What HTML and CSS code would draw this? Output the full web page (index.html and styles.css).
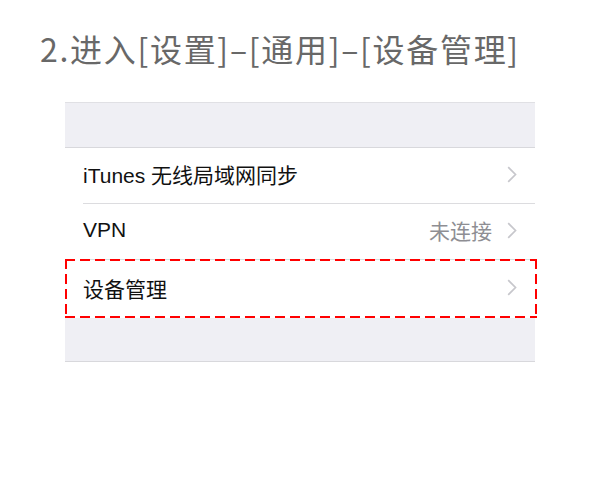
FILE: index.html
```html
<!DOCTYPE html>
<html lang="zh">
<head>
<meta charset="utf-8">
<link rel="stylesheet" href="styles.css">
</head>
<body>
<h1 class="title">2.进入[设置]–[通用]–[设备管理]</h1>
<div class="panel">
  <div class="gap top"></div>
  <div class="group">
    <div class="row">
      <span class="label">iTunes 无线局域网同步</span>
      <span class="right"><svg class="chev" width="10" height="17" viewBox="0 0 10 17"><path d="M1.2 1.2 L8.5 8.5 L1.2 15.8" fill="none" stroke="#c7c7cc" stroke-width="1.7"/></svg></span>
    </div>
    <div class="row">
      <span class="label">VPN</span>
      <span class="right"><span class="detail">未连接</span><svg class="chev" width="10" height="17" viewBox="0 0 10 17"><path d="M1.2 1.2 L8.5 8.5 L1.2 15.8" fill="none" stroke="#c7c7cc" stroke-width="1.7"/></svg></span>
    </div>
    <div class="row marked">
      <span class="label">设备管理</span>
      <span class="right"><svg class="chev" width="10" height="17" viewBox="0 0 10 17"><path d="M1.2 1.2 L8.5 8.5 L1.2 15.8" fill="none" stroke="#c7c7cc" stroke-width="1.7"/></svg></span>
    </div>
  </div>
  <div class="gap bottom"></div>
</div>
</body>
</html>
```
FILE: styles.css
```css
html, body {
  margin: 0;
  padding: 0;
  background: #ffffff;
}
body {
  font-family: "Liberation Sans", "Noto Sans CJK SC", sans-serif;
}
.title {
  margin: 0;
  padding: 26px 0 0 40px;
  height: 102px;
  box-sizing: border-box;
  font-family: "Noto Sans CJK SC", sans-serif;
  font-weight: 400;
  font-size: 32px;
  line-height: 44px;
  letter-spacing: 1.7px;
  color: #686868;
}
.panel {
  margin-left: 65px;
  width: 470px;
}
.gap {
  background: #efeff4;
}
.gap.top {
  height: 44px;
  border-top: 1px solid #e0e0e4;
  border-bottom: 1px solid #d8d8dc;
}
.gap.bottom {
  height: 43px;
  border-bottom: 1px solid #d8d8dc;
}
.group {
  background: #ffffff;
}
.row {
  position: relative;
  display: flex;
  align-items: center;
  justify-content: space-between;
  box-sizing: border-box;
  height: 56px;
  margin-left: 18px;
  padding: 0 18px 3px 0;
  font-size: 21px;
  color: #111111;
}
.row:first-child {
  height: 55px;
}
.row + .row {
  border-top: 1px solid #dcdcdf;
}
.row.marked {
  height: 59px;
}
.label {
  font-family: "Liberation Sans", "Noto Sans CJK SC", sans-serif;
}
.right {
  display: flex;
  align-items: center;
  gap: 15px;
}
.detail {
  color: #8e8e93;
  font-family: "Noto Sans CJK SC", sans-serif;
}
.chev {
  display: block;
}
.marked::after {
  content: "";
  position: absolute;
  left: -18px;
  right: -2px;
  top: -1px;
  bottom: 0;
  background:
    repeating-linear-gradient(90deg, #ff0000 0 10px, transparent 10px 15px) top left / 100% 2px no-repeat,
    repeating-linear-gradient(90deg, #ff0000 0 10px, transparent 10px 15px) bottom left / 100% 2px no-repeat,
    repeating-linear-gradient(180deg, #ff0000 0 10px, transparent 10px 15px) top left / 2px 100% no-repeat,
    repeating-linear-gradient(180deg, #ff0000 0 10px, transparent 10px 15px) top right / 2px 100% no-repeat;
  pointer-events: none;
}
```
